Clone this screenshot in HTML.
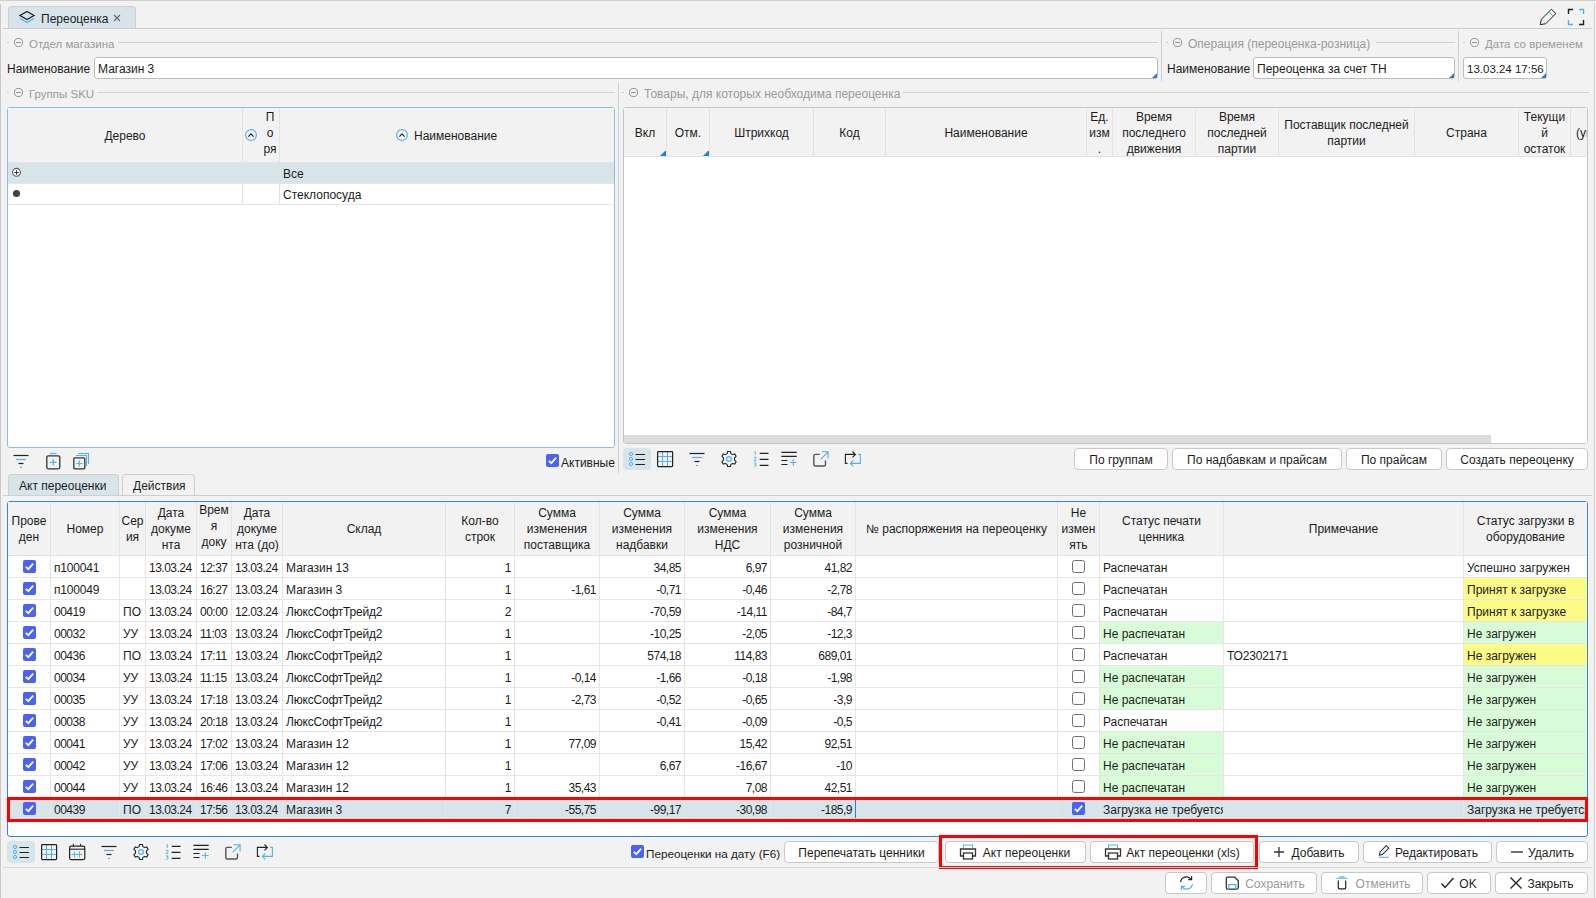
<!DOCTYPE html><html><head><meta charset="utf-8"><style>
*{box-sizing:border-box;margin:0;padding:0}
html,body{width:1596px;height:898px;overflow:hidden;background:#f2f2f2}
body{position:relative;font-family:"Liberation Sans",sans-serif;font-size:12px;color:#1c1c1c}
div{position:absolute}
.t{white-space:nowrap;line-height:16px}
.leg{color:#9a9a9a;font-size:11.5px}
.ln{background:#c9c9c9}
.btn{background:#fff;border:1px solid #c8c8c8;border-radius:4px;text-align:center;line-height:23px;white-space:nowrap}
.inp{background:#fff;border:1px solid #bdbdbd;border-radius:3px;line-height:23px;padding-left:3px;white-space:nowrap;overflow:hidden}
.tri{width:0;height:0;border-style:solid;border-width:0 0 5px 5px;border-color:transparent transparent #2f80c0 transparent}
.hc{display:flex;align-items:center;justify-content:center;text-align:center;line-height:16px;background:#f2f2f2;padding-top:2px}
.cell{white-space:nowrap;overflow:hidden;line-height:25px}
.cb{width:13px;height:13px;border-radius:2px;background:#4a62f6}
.cbo{width:13px;height:13px;border-radius:2.5px;background:#fff;border:1px solid #717171}
svg{position:absolute}
</style></head><body>
<div style="left:0px;top:0px;width:1596px;height:1px;background:#d0d0d0"></div>
<div style="left:0px;top:4px;width:1px;height:894px;background:#c8c8c8"></div>
<div style="left:1594px;top:3px;width:1px;height:895px;background:#d0d0d0"></div>
<div style="left:8px;top:6px;width:128px;height:23px;background:#d7e5ea;border:1px solid #cfcfcf;border-bottom:none;border-radius:4px 4px 0 0"></div>
<div style="left:3px;top:28px;width:1589px;height:1px;background:#cfcfcf"></div>
<svg style="left:18px;top:10px" width="18" height="16" viewBox="0 0 18 16"><path d="M9 1.5 L16 5.5 L9 9.5 L2 5.5 Z" fill="none" stroke="#222" stroke-width="1.3"/><path d="M2 8.5 L9 12.5 L16 8.5" fill="none" stroke="#4fb3ea" stroke-width="1.3"/></svg>
<div class="t" style="left:41px;top:11px;font-size:12px">Переоценка</div>
<svg style="left:113px;top:14px" width="8" height="8" viewBox="0 0 8 8"><path d="M1 1 L7 7 M7 1 L1 7" stroke="#666" stroke-width="1.1"/></svg>
<svg style="left:1539px;top:8px" width="18" height="18" viewBox="0 0 18 18"><path d="M1.2 16.7 L2.4 11.2 L12.4 1.2 L16.9 5.6 L6.7 15.7 Z" fill="none" stroke="#222" stroke-width="1" stroke-linejoin="round"/><path d="M9.8 3.9 L14 8" stroke="#4fb3ea" stroke-width="1"/></svg>
<svg style="left:1567px;top:8px" width="18" height="18" viewBox="0 0 18 18"><path d="M1.5 6 V1.5 H6" fill="none" stroke="#222" stroke-width="1.4"/><path d="M12 1.5 H16.5 V6" fill="none" stroke="#4fb3ea" stroke-width="1.4"/><path d="M1.5 12 V16.5 H6" fill="none" stroke="#4fb3ea" stroke-width="1.4"/><path d="M12 16.5 H16.5 V12" fill="none" stroke="#222" stroke-width="1.4"/></svg>
<div style="left:7px;top:42px;width:2px;height:1px;background:#c9c9c9"></div>
<svg style="left:14px;top:38px" width="10" height="10" viewBox="0 0 10 10"><circle cx="4.5" cy="4.5" r="4.05" fill="none" stroke="#8e8e8e" stroke-width="1"/><path d="M2.1 4.5 H6.9" stroke="#8e8e8e" stroke-width="1"/></svg>
<div class="t leg" style="left:29px;top:36px;font-size:11.5px">Отдел магазина</div>
<div style="left:118px;top:42px;width:1040px;height:1px;background:#d2d2d2"></div>
<div style="left:1166px;top:42px;width:2px;height:1px;background:#c9c9c9"></div>
<svg style="left:1173px;top:38px" width="10" height="10" viewBox="0 0 10 10"><circle cx="4.5" cy="4.5" r="4.05" fill="none" stroke="#8e8e8e" stroke-width="1"/><path d="M2.1 4.5 H6.9" stroke="#8e8e8e" stroke-width="1"/></svg>
<div class="t leg" style="left:1188px;top:36px;font-size:12px">Операция (переоценка-розница)</div>
<div style="left:1376px;top:42px;width:79px;height:1px;background:#d2d2d2"></div>
<div style="left:1463px;top:42px;width:2px;height:1px;background:#c9c9c9"></div>
<svg style="left:1470px;top:38px" width="10" height="10" viewBox="0 0 10 10"><circle cx="4.5" cy="4.5" r="4.05" fill="none" stroke="#8e8e8e" stroke-width="1"/><path d="M2.1 4.5 H6.9" stroke="#8e8e8e" stroke-width="1"/></svg>
<div class="t leg" style="left:1485px;top:36px;font-size:11.5px">Дата со временем</div>
<div style="left:1590px;top:42px;width:0px;height:1px;background:#d2d2d2"></div>
<div style="left:1161px;top:31px;width:1px;height:50px;background:#cfcfcf"></div>
<div style="left:1458px;top:31px;width:1px;height:50px;background:#cfcfcf"></div>
<div class="t" style="left:7px;top:61px;">Наименование</div>
<div class="inp" style="left:94px;top:57px;width:1064px;height:22px;">Магазин 3</div>
<div class="tri" style="left:1152px;top:73px;width:5px;height:5px;"></div>
<div class="t" style="left:1167px;top:61px;">Наименование</div>
<div class="inp" style="left:1253px;top:57px;width:202px;height:22px;">Переоценка за счет ТН</div>
<div class="tri" style="left:1449px;top:73px;width:5px;height:5px;"></div>
<div class="inp" style="left:1463px;top:57px;width:84px;height:22px;font-size:11.5px">13.03.24 17:56</div>
<div class="tri" style="left:1541px;top:73px;width:5px;height:5px;"></div>
<div style="left:7px;top:92px;width:2px;height:1px;background:#c9c9c9"></div>
<svg style="left:14px;top:88px" width="10" height="10" viewBox="0 0 10 10"><circle cx="4.5" cy="4.5" r="4.05" fill="none" stroke="#8e8e8e" stroke-width="1"/><path d="M2.1 4.5 H6.9" stroke="#8e8e8e" stroke-width="1"/></svg>
<div class="t leg" style="left:29px;top:86px;font-size:11.5px">Группы SKU</div>
<div style="left:97px;top:92px;width:518px;height:1px;background:#d2d2d2"></div>
<div style="left:622px;top:92px;width:2px;height:1px;background:#c9c9c9"></div>
<svg style="left:629px;top:88px" width="10" height="10" viewBox="0 0 10 10"><circle cx="4.5" cy="4.5" r="4.05" fill="none" stroke="#8e8e8e" stroke-width="1"/><path d="M2.1 4.5 H6.9" stroke="#8e8e8e" stroke-width="1"/></svg>
<div class="t leg" style="left:644px;top:86px;font-size:12px">Товары, для которых необходима переоценка</div>
<div style="left:903px;top:92px;width:686px;height:1px;background:#d2d2d2"></div>
<div style="left:618px;top:83px;width:1px;height:390px;background:#cfcfcf"></div>
<div style="left:7px;top:107px;width:608px;height:341px;background:#fff;border:1px solid #8dbfdc;border-radius:3px"></div>
<div style="left:8px;top:108px;width:606px;height:54px;background:#f2f2f2"></div>
<div style="left:8px;top:162px;width:606px;height:1px;background:#e3e3e3"></div>
<div style="left:242px;top:108px;width:1px;height:96px;background:#e3e3e3"></div>
<div style="left:279px;top:108px;width:1px;height:96px;background:#e3e3e3"></div>
<div class="hc" style="left:8px;top:108px;width:234px;height:54px">Дерево</div>
<div class="t" style="left:262px;top:109px;width:16px;text-align:center;line-height:16px">П<br>о<br>ря</div>
<svg style="left:245px;top:129px" width="13" height="13" viewBox="0 0 13 13"><circle cx="6" cy="6" r="5.4" fill="none" stroke="#5ab4ea" stroke-width="1.2"/><path d="M3.4 7.6 L6 4.9 L8.6 7.6" fill="none" stroke="#222" stroke-width="1.2"/></svg>
<svg style="left:396px;top:129px" width="13" height="13" viewBox="0 0 13 13"><circle cx="6" cy="6" r="5.4" fill="none" stroke="#5ab4ea" stroke-width="1.2"/><path d="M3.4 7.6 L6 4.9 L8.6 7.6" fill="none" stroke="#222" stroke-width="1.2"/></svg>
<div class="t" style="left:414px;top:128px;">Наименование</div>
<div style="left:8px;top:163px;width:606px;height:20px;background:#d7e5ea"></div>
<div style="left:8px;top:183px;width:606px;height:1px;background:#e6e6e6"></div>
<div style="left:8px;top:204px;width:606px;height:1px;background:#e6e6e6"></div>
<svg style="left:11px;top:167px" width="11" height="11" viewBox="0 0 11 11"><circle cx="5.5" cy="5.3" r="3.9" fill="#fff" stroke="#555" stroke-width="1.1"/><path d="M3.3 5.5 H7.7 M5.5 3.3 V7.7" stroke="#333" stroke-width="1"/></svg>
<svg style="left:12px;top:189px" width="9" height="9" viewBox="0 0 9 9"><circle cx="4.5" cy="4.5" r="3.6" fill="#444"/></svg>
<div class="t" style="left:283px;top:166px;">Все</div>
<div class="t" style="left:283px;top:187px;">Стеклопосуда</div>
<svg style="left:12px;top:453px" width="18" height="16" viewBox="0 0 18 16"><path d="M1.5 2.5 H16.5" stroke="#222" stroke-width="1.2"/><path d="M4 6.5 H14" stroke="#4fb3ea" stroke-width="1.2"/><path d="M6.5 10.5 H11.5" stroke="#222" stroke-width="1.2"/><path d="M8 14.5 H10" stroke="#4fb3ea" stroke-width="1.2"/></svg>
<svg style="left:45px;top:452px" width="18" height="18" viewBox="0 0 18 18"><rect x="1.8" y="3.8" width="13" height="13" rx="1.5" fill="none" stroke="#333" stroke-width="1.3"/><path d="M5 1.5 H11.5" stroke="#4fb3ea" stroke-width="1.2"/><path d="M8.3 7 V13.5 M5 10.3 H11.5" stroke="#4fb3ea" stroke-width="1.2"/></svg>
<svg style="left:72px;top:452px" width="18" height="18" viewBox="0 0 18 18"><rect x="1.8" y="5.8" width="11" height="11" rx="1" fill="none" stroke="#333" stroke-width="1.3"/><path d="M4 3.5 H14.5 V14" fill="none" stroke="#4fb3ea" stroke-width="1.1"/><path d="M6 1.5 H16.5 V12" fill="none" stroke="#4fb3ea" stroke-width="1.1"/><path d="M7.3 8.5 V14.5 M4.3 11.5 H10.3" stroke="#4fb3ea" stroke-width="1.2"/></svg>
<div class="cb" style="left:546px;top:454px"><svg style="left:0;top:0" width="13" height="13" viewBox="0 0 13 13"><path d="M2.8 6.8 L5.3 9.2 L10.2 3.6" fill="none" stroke="#fff" stroke-width="1.8"/></svg></div>
<div class="t" style="left:561px;top:455px;">Активные</div>
<div style="left:623px;top:107px;width:965px;height:337px;background:#fff;border:1px solid #c6c6c6;border-radius:3px"></div>
<div style="left:624px;top:108px;width:963px;height:48px;background:#f2f2f2"></div>
<div style="left:624px;top:156px;width:963px;height:1px;background:#e3e3e3"></div>
<div class="hc" style="left:624px;top:108px;width:42px;height:48px;overflow:hidden;">Вкл</div>
<div style="left:666px;top:108px;width:1px;height:48px;background:#e3e3e3"></div>
<div class="hc" style="left:667px;top:108px;width:42px;height:48px;overflow:hidden;">Отм.</div>
<div style="left:709px;top:108px;width:1px;height:48px;background:#e3e3e3"></div>
<div class="hc" style="left:710px;top:108px;width:103px;height:48px;overflow:hidden;">Штрихкод</div>
<div style="left:813px;top:108px;width:1px;height:48px;background:#e3e3e3"></div>
<div class="hc" style="left:814px;top:108px;width:71px;height:48px;overflow:hidden;">Код</div>
<div style="left:885px;top:108px;width:1px;height:48px;background:#e3e3e3"></div>
<div class="hc" style="left:886px;top:108px;width:200px;height:48px;overflow:hidden;">Наименование</div>
<div style="left:1086px;top:108px;width:1px;height:48px;background:#e3e3e3"></div>
<div class="hc" style="left:1087px;top:108px;width:25px;height:48px;overflow:hidden;">Ед.<br>изм<br>.</div>
<div style="left:1112px;top:108px;width:1px;height:48px;background:#e3e3e3"></div>
<div class="hc" style="left:1113px;top:108px;width:82px;height:48px;overflow:hidden;">Время<br>последнего<br>движения</div>
<div style="left:1195px;top:108px;width:1px;height:48px;background:#e3e3e3"></div>
<div class="hc" style="left:1196px;top:108px;width:82px;height:48px;overflow:hidden;">Время<br>последней<br>партии</div>
<div style="left:1278px;top:108px;width:1px;height:48px;background:#e3e3e3"></div>
<div class="hc" style="left:1279px;top:108px;width:135px;height:48px;overflow:hidden;">Поставщик последней<br>партии</div>
<div style="left:1414px;top:108px;width:1px;height:48px;background:#e3e3e3"></div>
<div class="hc" style="left:1415px;top:108px;width:103px;height:48px;overflow:hidden;">Страна</div>
<div style="left:1518px;top:108px;width:1px;height:48px;background:#e3e3e3"></div>
<div class="hc" style="left:1519px;top:108px;width:51px;height:48px;overflow:hidden;">Текущи<br>й<br>остаток</div>
<div style="left:1570px;top:108px;width:1px;height:48px;background:#e3e3e3"></div>
<div class="hc" style="left:1571px;top:108px;width:16px;height:48px;overflow:hidden;justify-content:flex-start;padding-left:5px;">(упаковок)</div>
<div class="tri" style="left:660px;top:150px;width:6px;height:6px;"></div>
<div class="tri" style="left:703px;top:150px;width:6px;height:6px;"></div>
<div style="left:624px;top:435px;width:963px;height:8px;background:#fff"></div>
<div style="left:624px;top:435px;width:867px;height:8px;background:#dcdcdc"></div>
<div style="left:623px;top:448px;width:28px;height:22px;background:#d7e5ea;border-radius:4px"></div>
<svg style="left:628px;top:450px" width="18" height="18" viewBox="0 0 18 18"><circle cx="3" cy="4" r="1.6" fill="none" stroke="#4fb3ea" stroke-width="1"/><circle cx="3" cy="9" r="1.6" fill="none" stroke="#4fb3ea" stroke-width="1"/><circle cx="3" cy="14" r="1.6" fill="none" stroke="#4fb3ea" stroke-width="1"/><path d="M7.5 4.5 H17 M7.5 9.5 H17 M7.5 14.5 H17" stroke="#222" stroke-width="1.1"/></svg>
<svg style="left:656px;top:450px" width="18" height="18" viewBox="0 0 18 18"><path d="M6.5 1.6 V16.6 M11.5 1.6 V16.6 M1.6 6.5 H16.6 M1.6 11.4 H16.6" stroke="#4fb3ea" stroke-width="1"/><rect x="1.6" y="1.6" width="15" height="15" rx="0.8" fill="none" stroke="#222" stroke-width="1.2"/></svg>
<svg style="left:688px;top:451px" width="18" height="16" viewBox="0 0 18 16"><path d="M1.5 2.5 H16.5" stroke="#222" stroke-width="1.2"/><path d="M4 6.5 H14" stroke="#4fb3ea" stroke-width="1.2"/><path d="M6.5 10.5 H11.5" stroke="#222" stroke-width="1.2"/><path d="M8 14.5 H10" stroke="#4fb3ea" stroke-width="1.2"/></svg>
<svg style="left:720px;top:450px" width="18" height="18" viewBox="0 0 18 18"><path d="M7.6 1.5 H10.4 L10.9 3.6 L12.6 4.6 L14.7 3.9 L16.1 6.3 L14.5 7.8 V10.2 L16.1 11.7 L14.7 14.1 L12.6 13.4 L10.9 14.4 L10.4 16.5 H7.6 L7.1 14.4 L5.4 13.4 L3.3 14.1 L1.9 11.7 L3.5 10.2 V7.8 L1.9 6.3 L3.3 3.9 L5.4 4.6 L7.1 3.6 Z" fill="none" stroke="#222" stroke-width="1.1" stroke-linejoin="round"/><circle cx="9" cy="9" r="2.4" fill="none" stroke="#4fb3ea" stroke-width="1.2"/></svg>
<svg style="left:752px;top:450px" width="18" height="18" viewBox="0 0 18 18"><path d="M2.3 2.3 L3.3 1.5 V5" fill="none" stroke="#4fb3ea" stroke-width="0.9"/><path d="M2 8 Q2.2 7 3.2 7 Q4.3 7.1 4.1 8.1 L2 10.8 H4.4" fill="none" stroke="#4fb3ea" stroke-width="0.9"/><path d="M2 13 H4.2 L3 14.3 Q4.4 14.4 4.3 15.4 Q4.1 16.6 2 16.2" fill="none" stroke="#4fb3ea" stroke-width="0.9"/><path d="M7.7 3.4 H16.5 M7.7 9.4 H16.5 M7.7 15.4 H16.5" stroke="#222" stroke-width="1.1"/></svg>
<svg style="left:780px;top:450px" width="18" height="18" viewBox="0 0 18 18"><path d="M1.4 2.4 H16.7 M1.4 6.4 H16.7 M1.4 10.5 H7.5 M1.4 14.5 H7.5" stroke="#222" stroke-width="1.1"/><path d="M13.3 9.3 V15.7 M10.1 12.5 H16.5" stroke="#4fb3ea" stroke-width="1.1"/></svg>
<svg style="left:812px;top:450px" width="18" height="18" viewBox="0 0 18 18"><path d="M7.8 4.4 H3.3 Q1.8 4.4 1.8 5.9 V14.5 Q1.8 16 3.3 16 H12 Q13.5 16 13.5 14.5 V10.4" fill="none" stroke="#555" stroke-width="1.4"/><path d="M8.6 9.3 L16.1 1.8 M9.7 1.8 H16.1 V8.5" fill="none" stroke="#4fb3ea" stroke-width="1.1"/></svg>
<svg style="left:844px;top:450px" width="18" height="18" viewBox="0 0 18 18"><path d="M3.5 13.4 H1.4 V4.4 H11.5 M8.5 1.5 L11.4 4.4 L8.5 7.3" fill="none" stroke="#222" stroke-width="1.1"/><path d="M14.3 4.4 H16.4 V13.4 H6.3 M9.3 10.5 L6.4 13.4 L9.3 16.3" fill="none" stroke="#4fb3ea" stroke-width="1.1"/></svg>
<div class="btn" style="left:1074px;top:448px;width:94px;height:22px;">По группам</div>
<div class="btn" style="left:1172px;top:448px;width:170px;height:22px;">По надбавкам и прайсам</div>
<div class="btn" style="left:1346px;top:448px;width:96px;height:22px;">По прайсам</div>
<div class="btn" style="left:1446px;top:448px;width:142px;height:22px;">Создать переоценку</div>
<div style="left:8px;top:474px;width:111px;height:22px;background:#d7e5ea;border:1px solid #cfcfcf;border-bottom:none;border-radius:4px 4px 0 0"><div class="t" style="left:10px;top:3px">Акт переоценки</div></div>
<div style="left:122px;top:474px;width:73px;height:22px;background:#f2f2f2;border:1px solid #cfcfcf;border-bottom:none;border-radius:4px 4px 0 0"><div class="t" style="left:10px;top:3px">Действия</div></div>
<div style="left:3px;top:495px;width:1589px;height:1px;background:#cfcfcf"></div>
<div style="left:7px;top:501px;width:1581px;height:336px;background:#fff;border:1px solid #3b87c3;border-radius:3px"></div>
<div style="left:8px;top:502px;width:1579px;height:53px;background:#f2f2f2"></div>
<div style="left:8px;top:555px;width:1579px;height:1px;background:#e3e3e3"></div>
<div class="hc" style="left:8px;top:502px;width:42px;height:53px;overflow:hidden;padding-top:0">Прове<br>ден</div>
<div style="left:50px;top:502px;width:1px;height:53px;background:#e3e3e3"></div>
<div class="hc" style="left:51px;top:502px;width:68px;height:53px;overflow:hidden;padding-top:0">Номер</div>
<div style="left:119px;top:502px;width:1px;height:53px;background:#e3e3e3"></div>
<div class="hc" style="left:120px;top:502px;width:25px;height:53px;overflow:hidden;padding-top:0">Сер<br>ия</div>
<div style="left:145px;top:502px;width:1px;height:53px;background:#e3e3e3"></div>
<div class="hc" style="left:146px;top:502px;width:50px;height:53px;overflow:hidden;padding-top:0">Дата<br>докуме<br>нта</div>
<div style="left:196px;top:502px;width:1px;height:53px;background:#e3e3e3"></div>
<div class="hc" style="left:197px;top:502px;width:34px;height:53px;overflow:hidden;padding-top:0"><span style="position:relative;top:-3px">Врем<br>я<br>доку</span></div>
<div style="left:231px;top:502px;width:1px;height:53px;background:#e3e3e3"></div>
<div class="hc" style="left:232px;top:502px;width:50px;height:53px;overflow:hidden;padding-top:0">Дата<br>докуме<br>нта (до)</div>
<div style="left:282px;top:502px;width:1px;height:53px;background:#e3e3e3"></div>
<div class="hc" style="left:283px;top:502px;width:162px;height:53px;overflow:hidden;padding-top:0">Склад</div>
<div style="left:445px;top:502px;width:1px;height:53px;background:#e3e3e3"></div>
<div class="hc" style="left:446px;top:502px;width:68px;height:53px;overflow:hidden;padding-top:0">Кол-во<br>строк</div>
<div style="left:514px;top:502px;width:1px;height:53px;background:#e3e3e3"></div>
<div class="hc" style="left:515px;top:502px;width:84px;height:53px;overflow:hidden;padding-top:0">Сумма<br>изменения<br>поставщика</div>
<div style="left:599px;top:502px;width:1px;height:53px;background:#e3e3e3"></div>
<div class="hc" style="left:600px;top:502px;width:84px;height:53px;overflow:hidden;padding-top:0">Сумма<br>изменения<br>надбавки</div>
<div style="left:684px;top:502px;width:1px;height:53px;background:#e3e3e3"></div>
<div class="hc" style="left:685px;top:502px;width:85px;height:53px;overflow:hidden;padding-top:0">Сумма<br>изменения<br>НДС</div>
<div style="left:770px;top:502px;width:1px;height:53px;background:#e3e3e3"></div>
<div class="hc" style="left:771px;top:502px;width:84px;height:53px;overflow:hidden;padding-top:0">Сумма<br>изменения<br>розничной</div>
<div style="left:855px;top:502px;width:1px;height:53px;background:#e3e3e3"></div>
<div class="hc" style="left:856px;top:502px;width:201px;height:53px;overflow:hidden;padding-top:0">№ распоряжения на переоценку</div>
<div style="left:1057px;top:502px;width:1px;height:53px;background:#e3e3e3"></div>
<div class="hc" style="left:1058px;top:502px;width:41px;height:53px;overflow:hidden;padding-top:0">Не<br>измен<br>ять</div>
<div style="left:1099px;top:502px;width:1px;height:53px;background:#e3e3e3"></div>
<div class="hc" style="left:1100px;top:502px;width:123px;height:53px;overflow:hidden;padding-top:0">Статус печати<br>ценника</div>
<div style="left:1223px;top:502px;width:1px;height:53px;background:#e3e3e3"></div>
<div class="hc" style="left:1224px;top:502px;width:239px;height:53px;overflow:hidden;padding-top:0">Примечание</div>
<div style="left:1463px;top:502px;width:1px;height:53px;background:#e3e3e3"></div>
<div class="hc" style="left:1464px;top:502px;width:123px;height:53px;overflow:hidden;padding-top:0">Статус загрузки в<br>оборудование</div>
<div style="left:8px;top:577px;width:1579px;height:1px;background:#e6e6e6"></div>
<div style="left:8px;top:556px;width:42px;height:21px;"></div>
<div class="cb" style="left:23px;top:560px"><svg style="left:0;top:0" width="13" height="13" viewBox="0 0 13 13"><path d="M2.8 6.8 L5.3 9.2 L10.2 3.6" fill="none" stroke="#fff" stroke-width="1.8"/></svg></div>
<div style="left:50px;top:556px;width:1px;height:21px;background:#e6e6e6"></div>
<div class="cell" style="left:51px;top:556px;width:68px;height:21px;padding-left:3px;letter-spacing:-0.2px;">п100041</div>
<div style="left:119px;top:556px;width:1px;height:21px;background:#e6e6e6"></div>
<div class="cell" style="left:120px;top:556px;width:25px;height:21px;padding-left:3px;"></div>
<div style="left:145px;top:556px;width:1px;height:21px;background:#e6e6e6"></div>
<div class="cell" style="left:146px;top:556px;width:50px;height:21px;padding-left:3px;letter-spacing:-0.5px;">13.03.24</div>
<div style="left:196px;top:556px;width:1px;height:21px;background:#e6e6e6"></div>
<div class="cell" style="left:197px;top:556px;width:34px;height:21px;padding-left:3px;letter-spacing:-0.5px;">12:37</div>
<div style="left:231px;top:556px;width:1px;height:21px;background:#e6e6e6"></div>
<div class="cell" style="left:232px;top:556px;width:50px;height:21px;padding-left:3px;letter-spacing:-0.5px;">13.03.24</div>
<div style="left:282px;top:556px;width:1px;height:21px;background:#e6e6e6"></div>
<div class="cell" style="left:283px;top:556px;width:162px;height:21px;padding-left:3px;">Магазин 13</div>
<div style="left:445px;top:556px;width:1px;height:21px;background:#e6e6e6"></div>
<div class="cell" style="left:446px;top:556px;width:68px;height:21px;text-align:right;padding-right:3px;letter-spacing:-0.5px;">1</div>
<div style="left:514px;top:556px;width:1px;height:21px;background:#e6e6e6"></div>
<div class="cell" style="left:515px;top:556px;width:84px;height:21px;text-align:right;padding-right:3px;"></div>
<div style="left:599px;top:556px;width:1px;height:21px;background:#e6e6e6"></div>
<div class="cell" style="left:600px;top:556px;width:84px;height:21px;text-align:right;padding-right:3px;letter-spacing:-0.5px;">34,85</div>
<div style="left:684px;top:556px;width:1px;height:21px;background:#e6e6e6"></div>
<div class="cell" style="left:685px;top:556px;width:85px;height:21px;text-align:right;padding-right:3px;letter-spacing:-0.5px;">6,97</div>
<div style="left:770px;top:556px;width:1px;height:21px;background:#e6e6e6"></div>
<div class="cell" style="left:771px;top:556px;width:84px;height:21px;text-align:right;padding-right:3px;letter-spacing:-0.5px;">41,82</div>
<div style="left:855px;top:556px;width:1px;height:21px;background:#e6e6e6"></div>
<div class="cell" style="left:856px;top:556px;width:201px;height:21px;padding-left:3px;"></div>
<div style="left:1057px;top:556px;width:1px;height:21px;background:#e6e6e6"></div>
<div class="cbo" style="left:1072px;top:560px"></div>
<div style="left:1099px;top:556px;width:1px;height:21px;background:#e6e6e6"></div>
<div class="cell" style="left:1100px;top:556px;width:123px;height:21px;padding-left:3px;">Распечатан</div>
<div style="left:1223px;top:556px;width:1px;height:21px;background:#e6e6e6"></div>
<div class="cell" style="left:1224px;top:556px;width:239px;height:21px;padding-left:3px;"></div>
<div style="left:1463px;top:556px;width:1px;height:21px;background:#e6e6e6"></div>
<div class="cell" style="left:1464px;top:556px;width:123px;height:21px;padding-left:3px;">Успешно загружен</div>
<div style="left:8px;top:599px;width:1579px;height:1px;background:#e6e6e6"></div>
<div style="left:8px;top:578px;width:42px;height:21px;"></div>
<div class="cb" style="left:23px;top:582px"><svg style="left:0;top:0" width="13" height="13" viewBox="0 0 13 13"><path d="M2.8 6.8 L5.3 9.2 L10.2 3.6" fill="none" stroke="#fff" stroke-width="1.8"/></svg></div>
<div style="left:50px;top:578px;width:1px;height:21px;background:#e6e6e6"></div>
<div class="cell" style="left:51px;top:578px;width:68px;height:21px;padding-left:3px;letter-spacing:-0.2px;">п100049</div>
<div style="left:119px;top:578px;width:1px;height:21px;background:#e6e6e6"></div>
<div class="cell" style="left:120px;top:578px;width:25px;height:21px;padding-left:3px;"></div>
<div style="left:145px;top:578px;width:1px;height:21px;background:#e6e6e6"></div>
<div class="cell" style="left:146px;top:578px;width:50px;height:21px;padding-left:3px;letter-spacing:-0.5px;">13.03.24</div>
<div style="left:196px;top:578px;width:1px;height:21px;background:#e6e6e6"></div>
<div class="cell" style="left:197px;top:578px;width:34px;height:21px;padding-left:3px;letter-spacing:-0.5px;">16:27</div>
<div style="left:231px;top:578px;width:1px;height:21px;background:#e6e6e6"></div>
<div class="cell" style="left:232px;top:578px;width:50px;height:21px;padding-left:3px;letter-spacing:-0.5px;">13.03.24</div>
<div style="left:282px;top:578px;width:1px;height:21px;background:#e6e6e6"></div>
<div class="cell" style="left:283px;top:578px;width:162px;height:21px;padding-left:3px;">Магазин 3</div>
<div style="left:445px;top:578px;width:1px;height:21px;background:#e6e6e6"></div>
<div class="cell" style="left:446px;top:578px;width:68px;height:21px;text-align:right;padding-right:3px;letter-spacing:-0.5px;">1</div>
<div style="left:514px;top:578px;width:1px;height:21px;background:#e6e6e6"></div>
<div class="cell" style="left:515px;top:578px;width:84px;height:21px;text-align:right;padding-right:3px;letter-spacing:-0.5px;">-1,61</div>
<div style="left:599px;top:578px;width:1px;height:21px;background:#e6e6e6"></div>
<div class="cell" style="left:600px;top:578px;width:84px;height:21px;text-align:right;padding-right:3px;letter-spacing:-0.5px;">-0,71</div>
<div style="left:684px;top:578px;width:1px;height:21px;background:#e6e6e6"></div>
<div class="cell" style="left:685px;top:578px;width:85px;height:21px;text-align:right;padding-right:3px;letter-spacing:-0.5px;">-0,46</div>
<div style="left:770px;top:578px;width:1px;height:21px;background:#e6e6e6"></div>
<div class="cell" style="left:771px;top:578px;width:84px;height:21px;text-align:right;padding-right:3px;letter-spacing:-0.5px;">-2,78</div>
<div style="left:855px;top:578px;width:1px;height:21px;background:#e6e6e6"></div>
<div class="cell" style="left:856px;top:578px;width:201px;height:21px;padding-left:3px;"></div>
<div style="left:1057px;top:578px;width:1px;height:21px;background:#e6e6e6"></div>
<div class="cbo" style="left:1072px;top:582px"></div>
<div style="left:1099px;top:578px;width:1px;height:21px;background:#e6e6e6"></div>
<div class="cell" style="left:1100px;top:578px;width:123px;height:21px;padding-left:3px;">Распечатан</div>
<div style="left:1223px;top:578px;width:1px;height:21px;background:#e6e6e6"></div>
<div class="cell" style="left:1224px;top:578px;width:239px;height:21px;padding-left:3px;"></div>
<div style="left:1463px;top:578px;width:1px;height:21px;background:#e6e6e6"></div>
<div class="cell" style="left:1464px;top:578px;width:123px;height:21px;background:#fbfb86;padding-left:3px;">Принят к загрузке</div>
<div style="left:8px;top:621px;width:1579px;height:1px;background:#e6e6e6"></div>
<div style="left:8px;top:600px;width:42px;height:21px;"></div>
<div class="cb" style="left:23px;top:604px"><svg style="left:0;top:0" width="13" height="13" viewBox="0 0 13 13"><path d="M2.8 6.8 L5.3 9.2 L10.2 3.6" fill="none" stroke="#fff" stroke-width="1.8"/></svg></div>
<div style="left:50px;top:600px;width:1px;height:21px;background:#e6e6e6"></div>
<div class="cell" style="left:51px;top:600px;width:68px;height:21px;padding-left:3px;letter-spacing:-0.5px;">00419</div>
<div style="left:119px;top:600px;width:1px;height:21px;background:#e6e6e6"></div>
<div class="cell" style="left:120px;top:600px;width:25px;height:21px;padding-left:3px;">ПО</div>
<div style="left:145px;top:600px;width:1px;height:21px;background:#e6e6e6"></div>
<div class="cell" style="left:146px;top:600px;width:50px;height:21px;padding-left:3px;letter-spacing:-0.5px;">13.03.24</div>
<div style="left:196px;top:600px;width:1px;height:21px;background:#e6e6e6"></div>
<div class="cell" style="left:197px;top:600px;width:34px;height:21px;padding-left:3px;letter-spacing:-0.5px;">00:00</div>
<div style="left:231px;top:600px;width:1px;height:21px;background:#e6e6e6"></div>
<div class="cell" style="left:232px;top:600px;width:50px;height:21px;padding-left:3px;letter-spacing:-0.5px;">12.03.24</div>
<div style="left:282px;top:600px;width:1px;height:21px;background:#e6e6e6"></div>
<div class="cell" style="left:283px;top:600px;width:162px;height:21px;padding-left:3px;letter-spacing:-0.2px;">ЛюксСофтТрейд2</div>
<div style="left:445px;top:600px;width:1px;height:21px;background:#e6e6e6"></div>
<div class="cell" style="left:446px;top:600px;width:68px;height:21px;text-align:right;padding-right:3px;letter-spacing:-0.5px;">2</div>
<div style="left:514px;top:600px;width:1px;height:21px;background:#e6e6e6"></div>
<div class="cell" style="left:515px;top:600px;width:84px;height:21px;text-align:right;padding-right:3px;"></div>
<div style="left:599px;top:600px;width:1px;height:21px;background:#e6e6e6"></div>
<div class="cell" style="left:600px;top:600px;width:84px;height:21px;text-align:right;padding-right:3px;letter-spacing:-0.5px;">-70,59</div>
<div style="left:684px;top:600px;width:1px;height:21px;background:#e6e6e6"></div>
<div class="cell" style="left:685px;top:600px;width:85px;height:21px;text-align:right;padding-right:3px;letter-spacing:-0.5px;">-14,11</div>
<div style="left:770px;top:600px;width:1px;height:21px;background:#e6e6e6"></div>
<div class="cell" style="left:771px;top:600px;width:84px;height:21px;text-align:right;padding-right:3px;letter-spacing:-0.5px;">-84,7</div>
<div style="left:855px;top:600px;width:1px;height:21px;background:#e6e6e6"></div>
<div class="cell" style="left:856px;top:600px;width:201px;height:21px;padding-left:3px;"></div>
<div style="left:1057px;top:600px;width:1px;height:21px;background:#e6e6e6"></div>
<div class="cbo" style="left:1072px;top:604px"></div>
<div style="left:1099px;top:600px;width:1px;height:21px;background:#e6e6e6"></div>
<div class="cell" style="left:1100px;top:600px;width:123px;height:21px;padding-left:3px;">Распечатан</div>
<div style="left:1223px;top:600px;width:1px;height:21px;background:#e6e6e6"></div>
<div class="cell" style="left:1224px;top:600px;width:239px;height:21px;padding-left:3px;"></div>
<div style="left:1463px;top:600px;width:1px;height:21px;background:#e6e6e6"></div>
<div class="cell" style="left:1464px;top:600px;width:123px;height:21px;background:#fbfb86;padding-left:3px;">Принят к загрузке</div>
<div style="left:8px;top:643px;width:1579px;height:1px;background:#e6e6e6"></div>
<div style="left:8px;top:622px;width:42px;height:21px;"></div>
<div class="cb" style="left:23px;top:626px"><svg style="left:0;top:0" width="13" height="13" viewBox="0 0 13 13"><path d="M2.8 6.8 L5.3 9.2 L10.2 3.6" fill="none" stroke="#fff" stroke-width="1.8"/></svg></div>
<div style="left:50px;top:622px;width:1px;height:21px;background:#e6e6e6"></div>
<div class="cell" style="left:51px;top:622px;width:68px;height:21px;padding-left:3px;letter-spacing:-0.5px;">00032</div>
<div style="left:119px;top:622px;width:1px;height:21px;background:#e6e6e6"></div>
<div class="cell" style="left:120px;top:622px;width:25px;height:21px;padding-left:3px;">УУ</div>
<div style="left:145px;top:622px;width:1px;height:21px;background:#e6e6e6"></div>
<div class="cell" style="left:146px;top:622px;width:50px;height:21px;padding-left:3px;letter-spacing:-0.5px;">13.03.24</div>
<div style="left:196px;top:622px;width:1px;height:21px;background:#e6e6e6"></div>
<div class="cell" style="left:197px;top:622px;width:34px;height:21px;padding-left:3px;letter-spacing:-0.5px;">11:03</div>
<div style="left:231px;top:622px;width:1px;height:21px;background:#e6e6e6"></div>
<div class="cell" style="left:232px;top:622px;width:50px;height:21px;padding-left:3px;letter-spacing:-0.5px;">13.03.24</div>
<div style="left:282px;top:622px;width:1px;height:21px;background:#e6e6e6"></div>
<div class="cell" style="left:283px;top:622px;width:162px;height:21px;padding-left:3px;letter-spacing:-0.2px;">ЛюксСофтТрейд2</div>
<div style="left:445px;top:622px;width:1px;height:21px;background:#e6e6e6"></div>
<div class="cell" style="left:446px;top:622px;width:68px;height:21px;text-align:right;padding-right:3px;letter-spacing:-0.5px;">1</div>
<div style="left:514px;top:622px;width:1px;height:21px;background:#e6e6e6"></div>
<div class="cell" style="left:515px;top:622px;width:84px;height:21px;text-align:right;padding-right:3px;"></div>
<div style="left:599px;top:622px;width:1px;height:21px;background:#e6e6e6"></div>
<div class="cell" style="left:600px;top:622px;width:84px;height:21px;text-align:right;padding-right:3px;letter-spacing:-0.5px;">-10,25</div>
<div style="left:684px;top:622px;width:1px;height:21px;background:#e6e6e6"></div>
<div class="cell" style="left:685px;top:622px;width:85px;height:21px;text-align:right;padding-right:3px;letter-spacing:-0.5px;">-2,05</div>
<div style="left:770px;top:622px;width:1px;height:21px;background:#e6e6e6"></div>
<div class="cell" style="left:771px;top:622px;width:84px;height:21px;text-align:right;padding-right:3px;letter-spacing:-0.5px;">-12,3</div>
<div style="left:855px;top:622px;width:1px;height:21px;background:#e6e6e6"></div>
<div class="cell" style="left:856px;top:622px;width:201px;height:21px;padding-left:3px;"></div>
<div style="left:1057px;top:622px;width:1px;height:21px;background:#e6e6e6"></div>
<div class="cbo" style="left:1072px;top:626px"></div>
<div style="left:1099px;top:622px;width:1px;height:21px;background:#e6e6e6"></div>
<div class="cell" style="left:1100px;top:622px;width:123px;height:21px;background:#d8fcd8;padding-left:3px;">Не распечатан</div>
<div style="left:1223px;top:622px;width:1px;height:21px;background:#e6e6e6"></div>
<div class="cell" style="left:1224px;top:622px;width:239px;height:21px;padding-left:3px;"></div>
<div style="left:1463px;top:622px;width:1px;height:21px;background:#e6e6e6"></div>
<div class="cell" style="left:1464px;top:622px;width:123px;height:21px;background:#d8fcd8;padding-left:3px;">Не загружен</div>
<div style="left:8px;top:665px;width:1579px;height:1px;background:#e6e6e6"></div>
<div style="left:8px;top:644px;width:42px;height:21px;"></div>
<div class="cb" style="left:23px;top:648px"><svg style="left:0;top:0" width="13" height="13" viewBox="0 0 13 13"><path d="M2.8 6.8 L5.3 9.2 L10.2 3.6" fill="none" stroke="#fff" stroke-width="1.8"/></svg></div>
<div style="left:50px;top:644px;width:1px;height:21px;background:#e6e6e6"></div>
<div class="cell" style="left:51px;top:644px;width:68px;height:21px;padding-left:3px;letter-spacing:-0.5px;">00436</div>
<div style="left:119px;top:644px;width:1px;height:21px;background:#e6e6e6"></div>
<div class="cell" style="left:120px;top:644px;width:25px;height:21px;padding-left:3px;">ПО</div>
<div style="left:145px;top:644px;width:1px;height:21px;background:#e6e6e6"></div>
<div class="cell" style="left:146px;top:644px;width:50px;height:21px;padding-left:3px;letter-spacing:-0.5px;">13.03.24</div>
<div style="left:196px;top:644px;width:1px;height:21px;background:#e6e6e6"></div>
<div class="cell" style="left:197px;top:644px;width:34px;height:21px;padding-left:3px;letter-spacing:-0.5px;">17:11</div>
<div style="left:231px;top:644px;width:1px;height:21px;background:#e6e6e6"></div>
<div class="cell" style="left:232px;top:644px;width:50px;height:21px;padding-left:3px;letter-spacing:-0.5px;">13.03.24</div>
<div style="left:282px;top:644px;width:1px;height:21px;background:#e6e6e6"></div>
<div class="cell" style="left:283px;top:644px;width:162px;height:21px;padding-left:3px;letter-spacing:-0.2px;">ЛюксСофтТрейд2</div>
<div style="left:445px;top:644px;width:1px;height:21px;background:#e6e6e6"></div>
<div class="cell" style="left:446px;top:644px;width:68px;height:21px;text-align:right;padding-right:3px;letter-spacing:-0.5px;">1</div>
<div style="left:514px;top:644px;width:1px;height:21px;background:#e6e6e6"></div>
<div class="cell" style="left:515px;top:644px;width:84px;height:21px;text-align:right;padding-right:3px;"></div>
<div style="left:599px;top:644px;width:1px;height:21px;background:#e6e6e6"></div>
<div class="cell" style="left:600px;top:644px;width:84px;height:21px;text-align:right;padding-right:3px;letter-spacing:-0.5px;">574,18</div>
<div style="left:684px;top:644px;width:1px;height:21px;background:#e6e6e6"></div>
<div class="cell" style="left:685px;top:644px;width:85px;height:21px;text-align:right;padding-right:3px;letter-spacing:-0.5px;">114,83</div>
<div style="left:770px;top:644px;width:1px;height:21px;background:#e6e6e6"></div>
<div class="cell" style="left:771px;top:644px;width:84px;height:21px;text-align:right;padding-right:3px;letter-spacing:-0.5px;">689,01</div>
<div style="left:855px;top:644px;width:1px;height:21px;background:#e6e6e6"></div>
<div class="cell" style="left:856px;top:644px;width:201px;height:21px;padding-left:3px;"></div>
<div style="left:1057px;top:644px;width:1px;height:21px;background:#e6e6e6"></div>
<div class="cbo" style="left:1072px;top:648px"></div>
<div style="left:1099px;top:644px;width:1px;height:21px;background:#e6e6e6"></div>
<div class="cell" style="left:1100px;top:644px;width:123px;height:21px;padding-left:3px;">Распечатан</div>
<div style="left:1223px;top:644px;width:1px;height:21px;background:#e6e6e6"></div>
<div class="cell" style="left:1224px;top:644px;width:239px;height:21px;padding-left:3px;letter-spacing:-0.2px;">ТО2302171</div>
<div style="left:1463px;top:644px;width:1px;height:21px;background:#e6e6e6"></div>
<div class="cell" style="left:1464px;top:644px;width:123px;height:21px;background:#fbfb86;padding-left:3px;">Не загружен</div>
<div style="left:8px;top:687px;width:1579px;height:1px;background:#e6e6e6"></div>
<div style="left:8px;top:666px;width:42px;height:21px;"></div>
<div class="cb" style="left:23px;top:670px"><svg style="left:0;top:0" width="13" height="13" viewBox="0 0 13 13"><path d="M2.8 6.8 L5.3 9.2 L10.2 3.6" fill="none" stroke="#fff" stroke-width="1.8"/></svg></div>
<div style="left:50px;top:666px;width:1px;height:21px;background:#e6e6e6"></div>
<div class="cell" style="left:51px;top:666px;width:68px;height:21px;padding-left:3px;letter-spacing:-0.5px;">00034</div>
<div style="left:119px;top:666px;width:1px;height:21px;background:#e6e6e6"></div>
<div class="cell" style="left:120px;top:666px;width:25px;height:21px;padding-left:3px;">УУ</div>
<div style="left:145px;top:666px;width:1px;height:21px;background:#e6e6e6"></div>
<div class="cell" style="left:146px;top:666px;width:50px;height:21px;padding-left:3px;letter-spacing:-0.5px;">13.03.24</div>
<div style="left:196px;top:666px;width:1px;height:21px;background:#e6e6e6"></div>
<div class="cell" style="left:197px;top:666px;width:34px;height:21px;padding-left:3px;letter-spacing:-0.5px;">11:15</div>
<div style="left:231px;top:666px;width:1px;height:21px;background:#e6e6e6"></div>
<div class="cell" style="left:232px;top:666px;width:50px;height:21px;padding-left:3px;letter-spacing:-0.5px;">13.03.24</div>
<div style="left:282px;top:666px;width:1px;height:21px;background:#e6e6e6"></div>
<div class="cell" style="left:283px;top:666px;width:162px;height:21px;padding-left:3px;letter-spacing:-0.2px;">ЛюксСофтТрейд2</div>
<div style="left:445px;top:666px;width:1px;height:21px;background:#e6e6e6"></div>
<div class="cell" style="left:446px;top:666px;width:68px;height:21px;text-align:right;padding-right:3px;letter-spacing:-0.5px;">1</div>
<div style="left:514px;top:666px;width:1px;height:21px;background:#e6e6e6"></div>
<div class="cell" style="left:515px;top:666px;width:84px;height:21px;text-align:right;padding-right:3px;letter-spacing:-0.5px;">-0,14</div>
<div style="left:599px;top:666px;width:1px;height:21px;background:#e6e6e6"></div>
<div class="cell" style="left:600px;top:666px;width:84px;height:21px;text-align:right;padding-right:3px;letter-spacing:-0.5px;">-1,66</div>
<div style="left:684px;top:666px;width:1px;height:21px;background:#e6e6e6"></div>
<div class="cell" style="left:685px;top:666px;width:85px;height:21px;text-align:right;padding-right:3px;letter-spacing:-0.5px;">-0,18</div>
<div style="left:770px;top:666px;width:1px;height:21px;background:#e6e6e6"></div>
<div class="cell" style="left:771px;top:666px;width:84px;height:21px;text-align:right;padding-right:3px;letter-spacing:-0.5px;">-1,98</div>
<div style="left:855px;top:666px;width:1px;height:21px;background:#e6e6e6"></div>
<div class="cell" style="left:856px;top:666px;width:201px;height:21px;padding-left:3px;"></div>
<div style="left:1057px;top:666px;width:1px;height:21px;background:#e6e6e6"></div>
<div class="cbo" style="left:1072px;top:670px"></div>
<div style="left:1099px;top:666px;width:1px;height:21px;background:#e6e6e6"></div>
<div class="cell" style="left:1100px;top:666px;width:123px;height:21px;background:#d8fcd8;padding-left:3px;">Не распечатан</div>
<div style="left:1223px;top:666px;width:1px;height:21px;background:#e6e6e6"></div>
<div class="cell" style="left:1224px;top:666px;width:239px;height:21px;padding-left:3px;"></div>
<div style="left:1463px;top:666px;width:1px;height:21px;background:#e6e6e6"></div>
<div class="cell" style="left:1464px;top:666px;width:123px;height:21px;background:#d8fcd8;padding-left:3px;">Не загружен</div>
<div style="left:8px;top:709px;width:1579px;height:1px;background:#e6e6e6"></div>
<div style="left:8px;top:688px;width:42px;height:21px;"></div>
<div class="cb" style="left:23px;top:692px"><svg style="left:0;top:0" width="13" height="13" viewBox="0 0 13 13"><path d="M2.8 6.8 L5.3 9.2 L10.2 3.6" fill="none" stroke="#fff" stroke-width="1.8"/></svg></div>
<div style="left:50px;top:688px;width:1px;height:21px;background:#e6e6e6"></div>
<div class="cell" style="left:51px;top:688px;width:68px;height:21px;padding-left:3px;letter-spacing:-0.5px;">00035</div>
<div style="left:119px;top:688px;width:1px;height:21px;background:#e6e6e6"></div>
<div class="cell" style="left:120px;top:688px;width:25px;height:21px;padding-left:3px;">УУ</div>
<div style="left:145px;top:688px;width:1px;height:21px;background:#e6e6e6"></div>
<div class="cell" style="left:146px;top:688px;width:50px;height:21px;padding-left:3px;letter-spacing:-0.5px;">13.03.24</div>
<div style="left:196px;top:688px;width:1px;height:21px;background:#e6e6e6"></div>
<div class="cell" style="left:197px;top:688px;width:34px;height:21px;padding-left:3px;letter-spacing:-0.5px;">17:18</div>
<div style="left:231px;top:688px;width:1px;height:21px;background:#e6e6e6"></div>
<div class="cell" style="left:232px;top:688px;width:50px;height:21px;padding-left:3px;letter-spacing:-0.5px;">13.03.24</div>
<div style="left:282px;top:688px;width:1px;height:21px;background:#e6e6e6"></div>
<div class="cell" style="left:283px;top:688px;width:162px;height:21px;padding-left:3px;letter-spacing:-0.2px;">ЛюксСофтТрейд2</div>
<div style="left:445px;top:688px;width:1px;height:21px;background:#e6e6e6"></div>
<div class="cell" style="left:446px;top:688px;width:68px;height:21px;text-align:right;padding-right:3px;letter-spacing:-0.5px;">1</div>
<div style="left:514px;top:688px;width:1px;height:21px;background:#e6e6e6"></div>
<div class="cell" style="left:515px;top:688px;width:84px;height:21px;text-align:right;padding-right:3px;letter-spacing:-0.5px;">-2,73</div>
<div style="left:599px;top:688px;width:1px;height:21px;background:#e6e6e6"></div>
<div class="cell" style="left:600px;top:688px;width:84px;height:21px;text-align:right;padding-right:3px;letter-spacing:-0.5px;">-0,52</div>
<div style="left:684px;top:688px;width:1px;height:21px;background:#e6e6e6"></div>
<div class="cell" style="left:685px;top:688px;width:85px;height:21px;text-align:right;padding-right:3px;letter-spacing:-0.5px;">-0,65</div>
<div style="left:770px;top:688px;width:1px;height:21px;background:#e6e6e6"></div>
<div class="cell" style="left:771px;top:688px;width:84px;height:21px;text-align:right;padding-right:3px;letter-spacing:-0.5px;">-3,9</div>
<div style="left:855px;top:688px;width:1px;height:21px;background:#e6e6e6"></div>
<div class="cell" style="left:856px;top:688px;width:201px;height:21px;padding-left:3px;"></div>
<div style="left:1057px;top:688px;width:1px;height:21px;background:#e6e6e6"></div>
<div class="cbo" style="left:1072px;top:692px"></div>
<div style="left:1099px;top:688px;width:1px;height:21px;background:#e6e6e6"></div>
<div class="cell" style="left:1100px;top:688px;width:123px;height:21px;background:#d8fcd8;padding-left:3px;">Не распечатан</div>
<div style="left:1223px;top:688px;width:1px;height:21px;background:#e6e6e6"></div>
<div class="cell" style="left:1224px;top:688px;width:239px;height:21px;padding-left:3px;"></div>
<div style="left:1463px;top:688px;width:1px;height:21px;background:#e6e6e6"></div>
<div class="cell" style="left:1464px;top:688px;width:123px;height:21px;background:#d8fcd8;padding-left:3px;">Не загружен</div>
<div style="left:8px;top:731px;width:1579px;height:1px;background:#e6e6e6"></div>
<div style="left:8px;top:710px;width:42px;height:21px;"></div>
<div class="cb" style="left:23px;top:714px"><svg style="left:0;top:0" width="13" height="13" viewBox="0 0 13 13"><path d="M2.8 6.8 L5.3 9.2 L10.2 3.6" fill="none" stroke="#fff" stroke-width="1.8"/></svg></div>
<div style="left:50px;top:710px;width:1px;height:21px;background:#e6e6e6"></div>
<div class="cell" style="left:51px;top:710px;width:68px;height:21px;padding-left:3px;letter-spacing:-0.5px;">00038</div>
<div style="left:119px;top:710px;width:1px;height:21px;background:#e6e6e6"></div>
<div class="cell" style="left:120px;top:710px;width:25px;height:21px;padding-left:3px;">УУ</div>
<div style="left:145px;top:710px;width:1px;height:21px;background:#e6e6e6"></div>
<div class="cell" style="left:146px;top:710px;width:50px;height:21px;padding-left:3px;letter-spacing:-0.5px;">13.03.24</div>
<div style="left:196px;top:710px;width:1px;height:21px;background:#e6e6e6"></div>
<div class="cell" style="left:197px;top:710px;width:34px;height:21px;padding-left:3px;letter-spacing:-0.5px;">20:18</div>
<div style="left:231px;top:710px;width:1px;height:21px;background:#e6e6e6"></div>
<div class="cell" style="left:232px;top:710px;width:50px;height:21px;padding-left:3px;letter-spacing:-0.5px;">13.03.24</div>
<div style="left:282px;top:710px;width:1px;height:21px;background:#e6e6e6"></div>
<div class="cell" style="left:283px;top:710px;width:162px;height:21px;padding-left:3px;letter-spacing:-0.2px;">ЛюксСофтТрейд2</div>
<div style="left:445px;top:710px;width:1px;height:21px;background:#e6e6e6"></div>
<div class="cell" style="left:446px;top:710px;width:68px;height:21px;text-align:right;padding-right:3px;letter-spacing:-0.5px;">1</div>
<div style="left:514px;top:710px;width:1px;height:21px;background:#e6e6e6"></div>
<div class="cell" style="left:515px;top:710px;width:84px;height:21px;text-align:right;padding-right:3px;"></div>
<div style="left:599px;top:710px;width:1px;height:21px;background:#e6e6e6"></div>
<div class="cell" style="left:600px;top:710px;width:84px;height:21px;text-align:right;padding-right:3px;letter-spacing:-0.5px;">-0,41</div>
<div style="left:684px;top:710px;width:1px;height:21px;background:#e6e6e6"></div>
<div class="cell" style="left:685px;top:710px;width:85px;height:21px;text-align:right;padding-right:3px;letter-spacing:-0.5px;">-0,09</div>
<div style="left:770px;top:710px;width:1px;height:21px;background:#e6e6e6"></div>
<div class="cell" style="left:771px;top:710px;width:84px;height:21px;text-align:right;padding-right:3px;letter-spacing:-0.5px;">-0,5</div>
<div style="left:855px;top:710px;width:1px;height:21px;background:#e6e6e6"></div>
<div class="cell" style="left:856px;top:710px;width:201px;height:21px;padding-left:3px;"></div>
<div style="left:1057px;top:710px;width:1px;height:21px;background:#e6e6e6"></div>
<div class="cbo" style="left:1072px;top:714px"></div>
<div style="left:1099px;top:710px;width:1px;height:21px;background:#e6e6e6"></div>
<div class="cell" style="left:1100px;top:710px;width:123px;height:21px;padding-left:3px;">Распечатан</div>
<div style="left:1223px;top:710px;width:1px;height:21px;background:#e6e6e6"></div>
<div class="cell" style="left:1224px;top:710px;width:239px;height:21px;padding-left:3px;"></div>
<div style="left:1463px;top:710px;width:1px;height:21px;background:#e6e6e6"></div>
<div class="cell" style="left:1464px;top:710px;width:123px;height:21px;background:#d8fcd8;padding-left:3px;">Не загружен</div>
<div style="left:8px;top:753px;width:1579px;height:1px;background:#e6e6e6"></div>
<div style="left:8px;top:732px;width:42px;height:21px;"></div>
<div class="cb" style="left:23px;top:736px"><svg style="left:0;top:0" width="13" height="13" viewBox="0 0 13 13"><path d="M2.8 6.8 L5.3 9.2 L10.2 3.6" fill="none" stroke="#fff" stroke-width="1.8"/></svg></div>
<div style="left:50px;top:732px;width:1px;height:21px;background:#e6e6e6"></div>
<div class="cell" style="left:51px;top:732px;width:68px;height:21px;padding-left:3px;letter-spacing:-0.5px;">00041</div>
<div style="left:119px;top:732px;width:1px;height:21px;background:#e6e6e6"></div>
<div class="cell" style="left:120px;top:732px;width:25px;height:21px;padding-left:3px;">УУ</div>
<div style="left:145px;top:732px;width:1px;height:21px;background:#e6e6e6"></div>
<div class="cell" style="left:146px;top:732px;width:50px;height:21px;padding-left:3px;letter-spacing:-0.5px;">13.03.24</div>
<div style="left:196px;top:732px;width:1px;height:21px;background:#e6e6e6"></div>
<div class="cell" style="left:197px;top:732px;width:34px;height:21px;padding-left:3px;letter-spacing:-0.5px;">17:02</div>
<div style="left:231px;top:732px;width:1px;height:21px;background:#e6e6e6"></div>
<div class="cell" style="left:232px;top:732px;width:50px;height:21px;padding-left:3px;letter-spacing:-0.5px;">13.03.24</div>
<div style="left:282px;top:732px;width:1px;height:21px;background:#e6e6e6"></div>
<div class="cell" style="left:283px;top:732px;width:162px;height:21px;padding-left:3px;">Магазин 12</div>
<div style="left:445px;top:732px;width:1px;height:21px;background:#e6e6e6"></div>
<div class="cell" style="left:446px;top:732px;width:68px;height:21px;text-align:right;padding-right:3px;letter-spacing:-0.5px;">1</div>
<div style="left:514px;top:732px;width:1px;height:21px;background:#e6e6e6"></div>
<div class="cell" style="left:515px;top:732px;width:84px;height:21px;text-align:right;padding-right:3px;letter-spacing:-0.5px;">77,09</div>
<div style="left:599px;top:732px;width:1px;height:21px;background:#e6e6e6"></div>
<div class="cell" style="left:600px;top:732px;width:84px;height:21px;text-align:right;padding-right:3px;"></div>
<div style="left:684px;top:732px;width:1px;height:21px;background:#e6e6e6"></div>
<div class="cell" style="left:685px;top:732px;width:85px;height:21px;text-align:right;padding-right:3px;letter-spacing:-0.5px;">15,42</div>
<div style="left:770px;top:732px;width:1px;height:21px;background:#e6e6e6"></div>
<div class="cell" style="left:771px;top:732px;width:84px;height:21px;text-align:right;padding-right:3px;letter-spacing:-0.5px;">92,51</div>
<div style="left:855px;top:732px;width:1px;height:21px;background:#e6e6e6"></div>
<div class="cell" style="left:856px;top:732px;width:201px;height:21px;padding-left:3px;"></div>
<div style="left:1057px;top:732px;width:1px;height:21px;background:#e6e6e6"></div>
<div class="cbo" style="left:1072px;top:736px"></div>
<div style="left:1099px;top:732px;width:1px;height:21px;background:#e6e6e6"></div>
<div class="cell" style="left:1100px;top:732px;width:123px;height:21px;background:#d8fcd8;padding-left:3px;">Не распечатан</div>
<div style="left:1223px;top:732px;width:1px;height:21px;background:#e6e6e6"></div>
<div class="cell" style="left:1224px;top:732px;width:239px;height:21px;padding-left:3px;"></div>
<div style="left:1463px;top:732px;width:1px;height:21px;background:#e6e6e6"></div>
<div class="cell" style="left:1464px;top:732px;width:123px;height:21px;background:#d8fcd8;padding-left:3px;">Не загружен</div>
<div style="left:8px;top:775px;width:1579px;height:1px;background:#e6e6e6"></div>
<div style="left:8px;top:754px;width:42px;height:21px;"></div>
<div class="cb" style="left:23px;top:758px"><svg style="left:0;top:0" width="13" height="13" viewBox="0 0 13 13"><path d="M2.8 6.8 L5.3 9.2 L10.2 3.6" fill="none" stroke="#fff" stroke-width="1.8"/></svg></div>
<div style="left:50px;top:754px;width:1px;height:21px;background:#e6e6e6"></div>
<div class="cell" style="left:51px;top:754px;width:68px;height:21px;padding-left:3px;letter-spacing:-0.5px;">00042</div>
<div style="left:119px;top:754px;width:1px;height:21px;background:#e6e6e6"></div>
<div class="cell" style="left:120px;top:754px;width:25px;height:21px;padding-left:3px;">УУ</div>
<div style="left:145px;top:754px;width:1px;height:21px;background:#e6e6e6"></div>
<div class="cell" style="left:146px;top:754px;width:50px;height:21px;padding-left:3px;letter-spacing:-0.5px;">13.03.24</div>
<div style="left:196px;top:754px;width:1px;height:21px;background:#e6e6e6"></div>
<div class="cell" style="left:197px;top:754px;width:34px;height:21px;padding-left:3px;letter-spacing:-0.5px;">17:06</div>
<div style="left:231px;top:754px;width:1px;height:21px;background:#e6e6e6"></div>
<div class="cell" style="left:232px;top:754px;width:50px;height:21px;padding-left:3px;letter-spacing:-0.5px;">13.03.24</div>
<div style="left:282px;top:754px;width:1px;height:21px;background:#e6e6e6"></div>
<div class="cell" style="left:283px;top:754px;width:162px;height:21px;padding-left:3px;">Магазин 12</div>
<div style="left:445px;top:754px;width:1px;height:21px;background:#e6e6e6"></div>
<div class="cell" style="left:446px;top:754px;width:68px;height:21px;text-align:right;padding-right:3px;letter-spacing:-0.5px;">1</div>
<div style="left:514px;top:754px;width:1px;height:21px;background:#e6e6e6"></div>
<div class="cell" style="left:515px;top:754px;width:84px;height:21px;text-align:right;padding-right:3px;"></div>
<div style="left:599px;top:754px;width:1px;height:21px;background:#e6e6e6"></div>
<div class="cell" style="left:600px;top:754px;width:84px;height:21px;text-align:right;padding-right:3px;letter-spacing:-0.5px;">6,67</div>
<div style="left:684px;top:754px;width:1px;height:21px;background:#e6e6e6"></div>
<div class="cell" style="left:685px;top:754px;width:85px;height:21px;text-align:right;padding-right:3px;letter-spacing:-0.5px;">-16,67</div>
<div style="left:770px;top:754px;width:1px;height:21px;background:#e6e6e6"></div>
<div class="cell" style="left:771px;top:754px;width:84px;height:21px;text-align:right;padding-right:3px;letter-spacing:-0.5px;">-10</div>
<div style="left:855px;top:754px;width:1px;height:21px;background:#e6e6e6"></div>
<div class="cell" style="left:856px;top:754px;width:201px;height:21px;padding-left:3px;"></div>
<div style="left:1057px;top:754px;width:1px;height:21px;background:#e6e6e6"></div>
<div class="cbo" style="left:1072px;top:758px"></div>
<div style="left:1099px;top:754px;width:1px;height:21px;background:#e6e6e6"></div>
<div class="cell" style="left:1100px;top:754px;width:123px;height:21px;background:#d8fcd8;padding-left:3px;">Не распечатан</div>
<div style="left:1223px;top:754px;width:1px;height:21px;background:#e6e6e6"></div>
<div class="cell" style="left:1224px;top:754px;width:239px;height:21px;padding-left:3px;"></div>
<div style="left:1463px;top:754px;width:1px;height:21px;background:#e6e6e6"></div>
<div class="cell" style="left:1464px;top:754px;width:123px;height:21px;background:#d8fcd8;padding-left:3px;">Не загружен</div>
<div style="left:8px;top:797px;width:1579px;height:1px;background:#e6e6e6"></div>
<div style="left:8px;top:776px;width:42px;height:21px;"></div>
<div class="cb" style="left:23px;top:780px"><svg style="left:0;top:0" width="13" height="13" viewBox="0 0 13 13"><path d="M2.8 6.8 L5.3 9.2 L10.2 3.6" fill="none" stroke="#fff" stroke-width="1.8"/></svg></div>
<div style="left:50px;top:776px;width:1px;height:21px;background:#e6e6e6"></div>
<div class="cell" style="left:51px;top:776px;width:68px;height:21px;padding-left:3px;letter-spacing:-0.5px;">00044</div>
<div style="left:119px;top:776px;width:1px;height:21px;background:#e6e6e6"></div>
<div class="cell" style="left:120px;top:776px;width:25px;height:21px;padding-left:3px;">УУ</div>
<div style="left:145px;top:776px;width:1px;height:21px;background:#e6e6e6"></div>
<div class="cell" style="left:146px;top:776px;width:50px;height:21px;padding-left:3px;letter-spacing:-0.5px;">13.03.24</div>
<div style="left:196px;top:776px;width:1px;height:21px;background:#e6e6e6"></div>
<div class="cell" style="left:197px;top:776px;width:34px;height:21px;padding-left:3px;letter-spacing:-0.5px;">16:46</div>
<div style="left:231px;top:776px;width:1px;height:21px;background:#e6e6e6"></div>
<div class="cell" style="left:232px;top:776px;width:50px;height:21px;padding-left:3px;letter-spacing:-0.5px;">13.03.24</div>
<div style="left:282px;top:776px;width:1px;height:21px;background:#e6e6e6"></div>
<div class="cell" style="left:283px;top:776px;width:162px;height:21px;padding-left:3px;">Магазин 12</div>
<div style="left:445px;top:776px;width:1px;height:21px;background:#e6e6e6"></div>
<div class="cell" style="left:446px;top:776px;width:68px;height:21px;text-align:right;padding-right:3px;letter-spacing:-0.5px;">1</div>
<div style="left:514px;top:776px;width:1px;height:21px;background:#e6e6e6"></div>
<div class="cell" style="left:515px;top:776px;width:84px;height:21px;text-align:right;padding-right:3px;letter-spacing:-0.5px;">35,43</div>
<div style="left:599px;top:776px;width:1px;height:21px;background:#e6e6e6"></div>
<div class="cell" style="left:600px;top:776px;width:84px;height:21px;text-align:right;padding-right:3px;"></div>
<div style="left:684px;top:776px;width:1px;height:21px;background:#e6e6e6"></div>
<div class="cell" style="left:685px;top:776px;width:85px;height:21px;text-align:right;padding-right:3px;letter-spacing:-0.5px;">7,08</div>
<div style="left:770px;top:776px;width:1px;height:21px;background:#e6e6e6"></div>
<div class="cell" style="left:771px;top:776px;width:84px;height:21px;text-align:right;padding-right:3px;letter-spacing:-0.5px;">42,51</div>
<div style="left:855px;top:776px;width:1px;height:21px;background:#e6e6e6"></div>
<div class="cell" style="left:856px;top:776px;width:201px;height:21px;padding-left:3px;"></div>
<div style="left:1057px;top:776px;width:1px;height:21px;background:#e6e6e6"></div>
<div class="cbo" style="left:1072px;top:780px"></div>
<div style="left:1099px;top:776px;width:1px;height:21px;background:#e6e6e6"></div>
<div class="cell" style="left:1100px;top:776px;width:123px;height:21px;background:#d8fcd8;padding-left:3px;">Не распечатан</div>
<div style="left:1223px;top:776px;width:1px;height:21px;background:#e6e6e6"></div>
<div class="cell" style="left:1224px;top:776px;width:239px;height:21px;padding-left:3px;"></div>
<div style="left:1463px;top:776px;width:1px;height:21px;background:#e6e6e6"></div>
<div class="cell" style="left:1464px;top:776px;width:123px;height:21px;background:#d8fcd8;padding-left:3px;">Не загружен</div>
<div style="left:8px;top:798px;width:1579px;height:21px;background:#d7e5ea"></div>
<div style="left:8px;top:819px;width:1579px;height:1px;background:#e6e6e6"></div>
<div style="left:8px;top:798px;width:42px;height:21px;"></div>
<div class="cb" style="left:23px;top:802px"><svg style="left:0;top:0" width="13" height="13" viewBox="0 0 13 13"><path d="M2.8 6.8 L5.3 9.2 L10.2 3.6" fill="none" stroke="#fff" stroke-width="1.8"/></svg></div>
<div style="left:50px;top:798px;width:1px;height:21px;background:#e6e6e6"></div>
<div class="cell" style="left:51px;top:798px;width:68px;height:21px;padding-left:3px;letter-spacing:-0.5px;">00439</div>
<div style="left:119px;top:798px;width:1px;height:21px;background:#e6e6e6"></div>
<div class="cell" style="left:120px;top:798px;width:25px;height:21px;padding-left:3px;">ПО</div>
<div style="left:145px;top:798px;width:1px;height:21px;background:#e6e6e6"></div>
<div class="cell" style="left:146px;top:798px;width:50px;height:21px;padding-left:3px;letter-spacing:-0.5px;">13.03.24</div>
<div style="left:196px;top:798px;width:1px;height:21px;background:#e6e6e6"></div>
<div class="cell" style="left:197px;top:798px;width:34px;height:21px;padding-left:3px;letter-spacing:-0.5px;">17:56</div>
<div style="left:231px;top:798px;width:1px;height:21px;background:#e6e6e6"></div>
<div class="cell" style="left:232px;top:798px;width:50px;height:21px;padding-left:3px;letter-spacing:-0.5px;">13.03.24</div>
<div style="left:282px;top:798px;width:1px;height:21px;background:#e6e6e6"></div>
<div class="cell" style="left:283px;top:798px;width:162px;height:21px;padding-left:3px;">Магазин 3</div>
<div style="left:445px;top:798px;width:1px;height:21px;background:#e6e6e6"></div>
<div class="cell" style="left:446px;top:798px;width:68px;height:21px;text-align:right;padding-right:3px;letter-spacing:-0.5px;">7</div>
<div style="left:514px;top:798px;width:1px;height:21px;background:#e6e6e6"></div>
<div class="cell" style="left:515px;top:798px;width:84px;height:21px;text-align:right;padding-right:3px;letter-spacing:-0.5px;">-55,75</div>
<div style="left:599px;top:798px;width:1px;height:21px;background:#e6e6e6"></div>
<div class="cell" style="left:600px;top:798px;width:84px;height:21px;text-align:right;padding-right:3px;letter-spacing:-0.5px;">-99,17</div>
<div style="left:684px;top:798px;width:1px;height:21px;background:#e6e6e6"></div>
<div class="cell" style="left:685px;top:798px;width:85px;height:21px;text-align:right;padding-right:3px;letter-spacing:-0.5px;">-30,98</div>
<div style="left:770px;top:798px;width:1px;height:21px;background:#e6e6e6"></div>
<div class="cell" style="left:771px;top:798px;width:84px;height:21px;text-align:right;padding-right:3px;letter-spacing:-0.5px;">-185,9</div>
<div style="left:855px;top:798px;width:1px;height:21px;background:#e6e6e6"></div>
<div class="cell" style="left:856px;top:798px;width:201px;height:21px;padding-left:3px;"></div>
<div style="left:1057px;top:798px;width:1px;height:21px;background:#e6e6e6"></div>
<div class="cb" style="left:1072px;top:802px"><svg style="left:0;top:0" width="13" height="13" viewBox="0 0 13 13"><path d="M2.8 6.8 L5.3 9.2 L10.2 3.6" fill="none" stroke="#fff" stroke-width="1.8"/></svg></div>
<div style="left:1099px;top:798px;width:1px;height:21px;background:#e6e6e6"></div>
<div class="cell" style="left:1100px;top:798px;width:123px;height:21px;padding-left:3px;">Загрузка не требуется</div>
<div style="left:1223px;top:798px;width:1px;height:21px;background:#e6e6e6"></div>
<div class="cell" style="left:1224px;top:798px;width:239px;height:21px;padding-left:3px;"></div>
<div style="left:1463px;top:798px;width:1px;height:21px;background:#e6e6e6"></div>
<div class="cell" style="left:1464px;top:798px;width:123px;height:21px;padding-left:3px;">Загрузка не требуется</div>
<div style="left:855px;top:799px;width:1px;height:19px;background:#2f80c0"></div>
<div style="left:7px;top:797px;width:1581px;height:25px;border:3px solid #ff0000"></div>
<div style="left:7px;top:841px;width:28px;height:22px;background:#d7e5ea;border-radius:4px"></div>
<svg style="left:12px;top:843px" width="18" height="18" viewBox="0 0 18 18"><circle cx="3" cy="4" r="1.6" fill="none" stroke="#4fb3ea" stroke-width="1"/><circle cx="3" cy="9" r="1.6" fill="none" stroke="#4fb3ea" stroke-width="1"/><circle cx="3" cy="14" r="1.6" fill="none" stroke="#4fb3ea" stroke-width="1"/><path d="M7.5 4.5 H17 M7.5 9.5 H17 M7.5 14.5 H17" stroke="#222" stroke-width="1.1"/></svg>
<svg style="left:40px;top:843px" width="18" height="18" viewBox="0 0 18 18"><path d="M6.5 1.6 V16.6 M11.5 1.6 V16.6 M1.6 6.5 H16.6 M1.6 11.4 H16.6" stroke="#4fb3ea" stroke-width="1"/><rect x="1.6" y="1.6" width="15" height="15" rx="0.8" fill="none" stroke="#222" stroke-width="1.2"/></svg>
<svg style="left:68px;top:843px" width="18" height="18" viewBox="0 0 18 18"><rect x="1.6" y="3.1" width="15.2" height="13.6" rx="1.8" fill="none" stroke="#222" stroke-width="1.2"/><path d="M1.6 6.2 H16.8" stroke="#222" stroke-width="1.1"/><path d="M5.4 0.8 V3 M12.6 0.8 V3" stroke="#222" stroke-width="1"/><path d="M6.4 8.5 V14.5 M11.5 8.5 V14.5 M3.5 11.5 H14.5" stroke="#4fb3ea" stroke-width="1"/></svg>
<svg style="left:100px;top:844px" width="18" height="16" viewBox="0 0 18 16"><path d="M1.5 2.5 H16.5" stroke="#222" stroke-width="1.2"/><path d="M4 6.5 H14" stroke="#4fb3ea" stroke-width="1.2"/><path d="M6.5 10.5 H11.5" stroke="#222" stroke-width="1.2"/><path d="M8 14.5 H10" stroke="#4fb3ea" stroke-width="1.2"/></svg>
<svg style="left:132px;top:843px" width="18" height="18" viewBox="0 0 18 18"><path d="M7.6 1.5 H10.4 L10.9 3.6 L12.6 4.6 L14.7 3.9 L16.1 6.3 L14.5 7.8 V10.2 L16.1 11.7 L14.7 14.1 L12.6 13.4 L10.9 14.4 L10.4 16.5 H7.6 L7.1 14.4 L5.4 13.4 L3.3 14.1 L1.9 11.7 L3.5 10.2 V7.8 L1.9 6.3 L3.3 3.9 L5.4 4.6 L7.1 3.6 Z" fill="none" stroke="#222" stroke-width="1.1" stroke-linejoin="round"/><circle cx="9" cy="9" r="2.4" fill="none" stroke="#4fb3ea" stroke-width="1.2"/></svg>
<svg style="left:164px;top:843px" width="18" height="18" viewBox="0 0 18 18"><path d="M2.3 2.3 L3.3 1.5 V5" fill="none" stroke="#4fb3ea" stroke-width="0.9"/><path d="M2 8 Q2.2 7 3.2 7 Q4.3 7.1 4.1 8.1 L2 10.8 H4.4" fill="none" stroke="#4fb3ea" stroke-width="0.9"/><path d="M2 13 H4.2 L3 14.3 Q4.4 14.4 4.3 15.4 Q4.1 16.6 2 16.2" fill="none" stroke="#4fb3ea" stroke-width="0.9"/><path d="M7.7 3.4 H16.5 M7.7 9.4 H16.5 M7.7 15.4 H16.5" stroke="#222" stroke-width="1.1"/></svg>
<svg style="left:192px;top:843px" width="18" height="18" viewBox="0 0 18 18"><path d="M1.4 2.4 H16.7 M1.4 6.4 H16.7 M1.4 10.5 H7.5 M1.4 14.5 H7.5" stroke="#222" stroke-width="1.1"/><path d="M13.3 9.3 V15.7 M10.1 12.5 H16.5" stroke="#4fb3ea" stroke-width="1.1"/></svg>
<svg style="left:224px;top:843px" width="18" height="18" viewBox="0 0 18 18"><path d="M7.8 4.4 H3.3 Q1.8 4.4 1.8 5.9 V14.5 Q1.8 16 3.3 16 H12 Q13.5 16 13.5 14.5 V10.4" fill="none" stroke="#555" stroke-width="1.4"/><path d="M8.6 9.3 L16.1 1.8 M9.7 1.8 H16.1 V8.5" fill="none" stroke="#4fb3ea" stroke-width="1.1"/></svg>
<svg style="left:256px;top:843px" width="18" height="18" viewBox="0 0 18 18"><path d="M3.5 13.4 H1.4 V4.4 H11.5 M8.5 1.5 L11.4 4.4 L8.5 7.3" fill="none" stroke="#222" stroke-width="1.1"/><path d="M14.3 4.4 H16.4 V13.4 H6.3 M9.3 10.5 L6.4 13.4 L9.3 16.3" fill="none" stroke="#4fb3ea" stroke-width="1.1"/></svg>
<div class="cb" style="left:631px;top:845px"><svg style="left:0;top:0" width="13" height="13" viewBox="0 0 13 13"><path d="M2.8 6.8 L5.3 9.2 L10.2 3.6" fill="none" stroke="#fff" stroke-width="1.8"/></svg></div>
<div class="t" style="left:646px;top:846px;font-size:11.7px">Переоценки на дату (F6)</div>
<div class="btn" style="left:784px;top:841px;width:155px;height:22px;">Перепечатать ценники</div>
<div class="btn" style="left:945px;top:841px;width:141px;height:22px;"><span style="padding-left:22px">Акт переоценки</span></div>
<svg style="left:959px;top:844px" width="18" height="16" viewBox="0 0 18 16"><path d="M4.5 4 V1 H13.5 V4" fill="none" stroke="#4fb3ea" stroke-width="1.1"/><path d="M4 12 H1.5 V5 H16.5 V12 H14" fill="none" stroke="#333" stroke-width="1.3"/><rect x="4.5" y="9" width="9" height="6" fill="none" stroke="#333" stroke-width="1.3"/></svg>
<div class="btn" style="left:1090px;top:841px;width:164px;height:22px;"><span style="padding-left:22px">Акт переоценки (xls)</span></div>
<svg style="left:1104px;top:844px" width="18" height="16" viewBox="0 0 18 16"><path d="M4.5 4 V1 H13.5 V4" fill="none" stroke="#4fb3ea" stroke-width="1.1"/><path d="M4 12 H1.5 V5 H16.5 V12 H14" fill="none" stroke="#333" stroke-width="1.3"/><rect x="4.5" y="9" width="9" height="6" fill="none" stroke="#333" stroke-width="1.3"/></svg>
<div class="btn" style="left:1259px;top:841px;width:100px;height:22px;"><span style="padding-left:18px">Добавить</span></div>
<svg style="left:1273px;top:846px" width="12" height="12" viewBox="0 0 12 12"><path d="M6 1 V11 M1 6 H11" stroke="#333" stroke-width="1.3"/></svg>
<div class="btn" style="left:1363px;top:841px;width:129px;height:22px;"><span style="padding-left:18px">Редактировать</span></div>
<svg style="left:1377px;top:844px" width="16" height="16" viewBox="0 0 16 16"><path d="M2.3 11.3 L3.1 7.9 L9.3 1.7 L11.8 4.2 L5.6 10.4 Z" fill="none" stroke="#333" stroke-width="1.1" stroke-linejoin="round"/><path d="M1.8 13.3 H12" stroke="#4fb3ea" stroke-width="1.1"/></svg>
<div class="btn" style="left:1496px;top:841px;width:92px;height:22px;"><span style="padding-left:18px">Удалить</span></div>
<svg style="left:1510px;top:845px" width="14" height="14" viewBox="0 0 14 14"><path d="M1 7 H13" stroke="#333" stroke-width="1.4"/></svg>
<div style="left:939px;top:835px;width:319px;height:34px;border:3px solid #ff0000"></div>
<div style="left:3px;top:867px;width:1589px;height:1px;background:#d5d5d5"></div>
<div class="btn" style="left:1165px;top:872px;width:42px;height:22px;"></div>
<svg style="left:1178px;top:875px" width="17" height="16" viewBox="0 0 17 16"><path d="M2.6 7 A5.8 5.8 0 0 1 13 4.2" fill="none" stroke="#222" stroke-width="1.2"/><path d="M10.2 4.6 L13.6 4.6 L13.6 1.2" fill="none" stroke="#222" stroke-width="1.2"/><path d="M14.4 9 A5.8 5.8 0 0 1 4 11.8" fill="none" stroke="#4fb3ea" stroke-width="1.2"/><path d="M6.8 11.4 L3.4 11.4 L3.4 14.8" fill="none" stroke="#4fb3ea" stroke-width="1.2"/></svg>
<div class="btn" style="left:1211px;top:872px;width:106px;height:22px;color:#9a9a9a"><span style="padding-left:22px">Сохранить</span></div>
<svg style="left:1225px;top:876px" width="15" height="15" viewBox="0 0 15 15"><path d="M2.8 1.2 H9.8 L13.3 4.7 V11.6 Q13.3 13.1 11.8 13.1 H2.8 Q1.3 13.1 1.3 11.6 V2.7 Q1.3 1.2 2.8 1.2 Z" fill="none" stroke="#333" stroke-width="1.3"/><path d="M3.8 12.5 V8.6 H10.8 V12.5" fill="none" stroke="#4fb3ea" stroke-width="1.3"/></svg>
<div class="btn" style="left:1321px;top:872px;width:102px;height:22px;color:#9a9a9a"><span style="padding-left:22px">Отменить</span></div>
<svg style="left:1335px;top:876px" width="14" height="14" viewBox="0 0 14 14"><path d="M1.3 2.2 H12.7 M5 2 V0.7 H9 V2" fill="none" stroke="#4fb3ea" stroke-width="1.1"/><path d="M3.3 4.5 V11.8 Q3.3 12.8 4.3 12.8 H9.7 Q10.7 12.8 10.7 11.8 V4.5" fill="none" stroke="#222" stroke-width="1.2"/></svg>
<div class="btn" style="left:1427px;top:872px;width:64px;height:22px;"><span style="padding-left:18px">OK</span></div>
<svg style="left:1440px;top:876px" width="15" height="14" viewBox="0 0 15 14"><path d="M1.5 7.5 L5 11.5 L13.5 2" fill="none" stroke="#222" stroke-width="1.4"/></svg>
<div class="btn" style="left:1495px;top:872px;width:93px;height:22px;"><span style="padding-left:18px">Закрыть</span></div>
<svg style="left:1509px;top:876px" width="14" height="14" viewBox="0 0 14 14"><path d="M1.5 1.5 L12.5 12.5 M12.5 1.5 L1.5 12.5" stroke="#222" stroke-width="1.4"/></svg>
</body></html>
